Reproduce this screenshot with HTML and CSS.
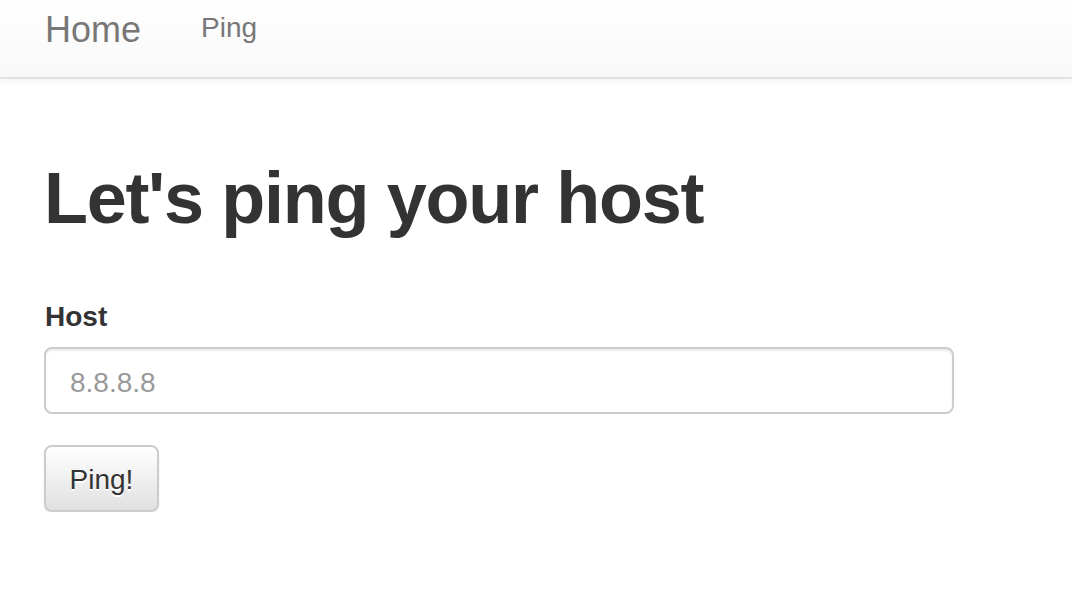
FILE: index.html
```html
<!DOCTYPE html>
<html>
<head>
<meta charset="utf-8">
<link rel="stylesheet" href="styles.css">
</head>
<body>
<nav class="navbar">
  <a class="brand" href="#">Home</a>
  <a class="nav-link" href="#">Ping</a>
</nav>
<main class="container">
  <h1 class="title">Let's ping your host</h1>
  <form class="ping-form">
    <label class="label" for="host">Host</label>
    <input class="input" id="host" type="text" placeholder="8.8.8.8">
    <button class="btn" type="button">Ping!</button>
  </form>
</main>
</body>
</html>
```
FILE: styles.css
```css
html, body {
  margin: 0;
  padding: 0;
  background: #fff;
  font-family: "Liberation Sans", Arial, Helvetica, sans-serif;
  color: #333;
}

.navbar {
  display: flex;
  align-items: flex-start;
  height: 77px;
  padding-left: 45px;
  background: linear-gradient(to bottom, #ffffff 0%, #f8f8f8 100%);
  border-bottom: 2px solid #e2e2e2;
  box-shadow: 0 2px 8px rgba(0, 0, 0, 0.06);
}

.brand {
  font-size: 36px;
  line-height: 40px;
  padding-top: 10px;
  color: #777;
  text-decoration: none;
}

.nav-link {
  font-size: 28px;
  line-height: 32px;
  padding-top: 12px;
  margin-left: 60px;
  color: #777;
  text-decoration: none;
}

.container {
  padding: 0 44px;
}

.title {
  margin: 79px 0 0 0;
  font-size: 72px;
  line-height: 80px;
  font-weight: 700;
  color: #333;
  letter-spacing: -1.3px;
}

.ping-form {
  display: flex;
  flex-direction: column;
  align-items: flex-start;
  margin-top: 63px;
}

.label {
  font-size: 28px;
  line-height: 32px;
  font-weight: 700;
  color: #333;
  padding-left: 1px;
}

.input {
  box-sizing: border-box;
  margin-top: 14px;
  width: 910px;
  height: 67px;
  padding: 4px 24px 0 24px;
  border: 2px solid #ccc;
  border-radius: 8px;
  font-family: "Liberation Sans", Arial, sans-serif;
  font-size: 28px;
  color: #555;
  background: #fff;
  box-shadow: inset 0 2px 2px rgba(0, 0, 0, 0.075);
  outline: none;
}

.input::placeholder {
  color: #999;
}

.btn {
  box-sizing: border-box;
  margin-top: 31px;
  width: 115px;
  height: 67px;
  padding: 3px 0 0 0;
  border: 2px solid #ccc;
  border-radius: 8px;
  font-family: "Liberation Sans", Arial, sans-serif;
  font-size: 28px;
  color: #333;
  background: linear-gradient(to bottom, #ffffff 0%, #e0e0e0 100%);
  text-shadow: 0 2px 0 #fff;
  box-shadow: inset 0 2px 0 rgba(255, 255, 255, 0.15), 0 2px 2px rgba(0, 0, 0, 0.075);
  cursor: pointer;
}
```
